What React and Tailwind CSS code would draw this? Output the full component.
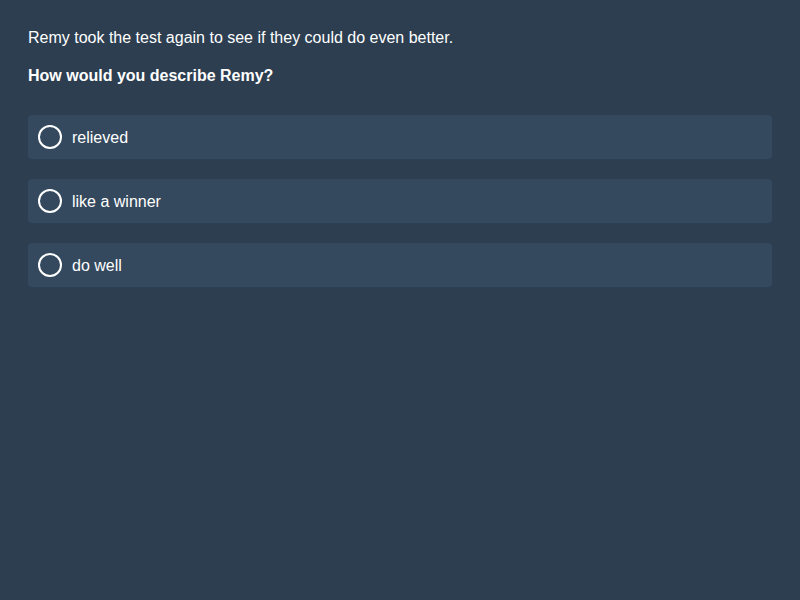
export default function App() {
  const options = ['relieved', 'like a winner', 'do well'];

  return (
    <div
      className="min-h-screen w-full bg-[#2c3e50] text-white px-7 pt-[29px] pb-7"
      style={{ fontFamily: '"Liberation Sans", Arial, sans-serif' }}
    >
      <p className="text-base leading-[18px] mb-5">
        Remy took the test again to see if they could do even better.
      </p>
      <p className="text-base leading-[18px] font-bold mb-[30px]">How would you describe Remy?</p>

      <div className="flex flex-col gap-5">
        {options.map((opt) => (
          <label
            key={opt}
            className="flex items-center gap-[10px] h-[44px] pl-[10px] rounded bg-[#34495e] cursor-pointer"
          >
            <span className="w-6 h-6 rounded-full border-2 border-white shrink-0" />
            <span className="text-base leading-[18px] pt-[2px]">{opt}</span>
          </label>
        ))}
      </div>
    </div>
  );
}
